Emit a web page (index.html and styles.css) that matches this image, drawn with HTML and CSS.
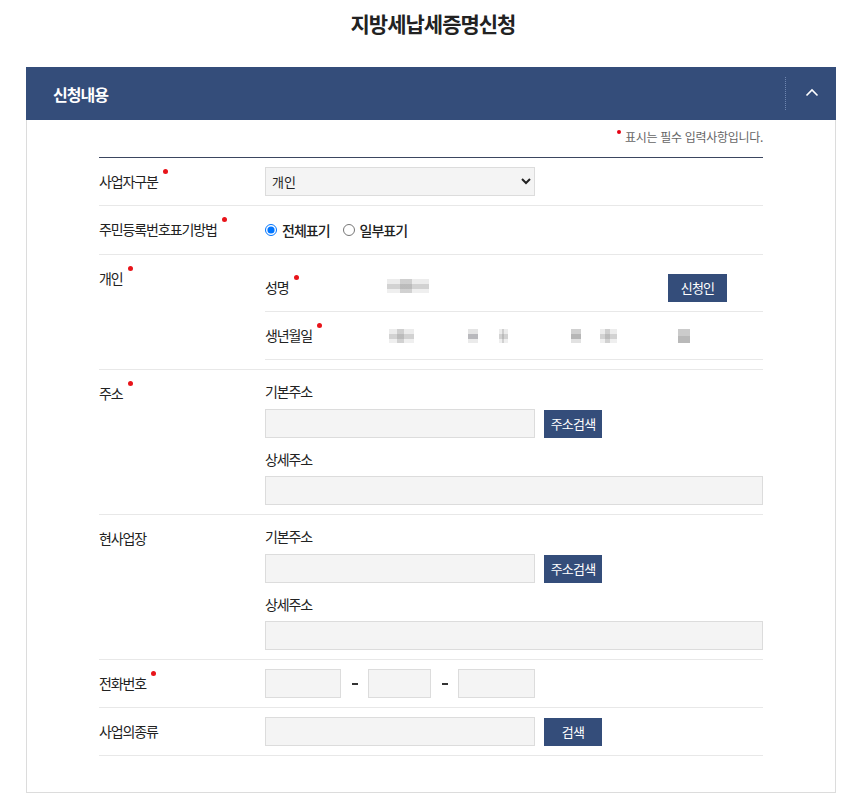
FILE: index.html
```html
<!DOCTYPE html>
<html lang="ko">
<head>
<meta charset="utf-8">
<title>지방세납세증명신청</title>
<link rel="stylesheet" href="styles.css">
</head>
<body>
<h1 class="title">지방세납세증명신청</h1>
<section class="panel">
  <div class="panel-head">
    <h2 class="panel-title">신청내용</h2>
    <div class="toggle">
      <svg width="14" height="9" viewBox="0 0 14 9"><polyline points="1.5,7.5 7,2 12.5,7.5" fill="none" stroke="#fff" stroke-width="1.6"/></svg>
    </div>
  </div>
  <div class="panel-body">
    <p class="note"><span class="dot"></span>표시는 필수 입력사항입니다.</p>
    <div class="form">
      <div class="row">
        <div class="label"><span class="req">사업자구분</span></div>
        <div class="field">
          <select class="select"><option>개인</option><option>법인</option></select>
        </div>
      </div>
      <div class="row row-radio">
        <div class="label"><span class="req">주민등록번호표기방법</span></div>
        <div class="field radios">
          <label class="radio"><input type="radio" name="m" checked> 전체표기</label>
          <label class="radio"><input type="radio" name="m"> 일부표기</label>
        </div>
      </div>
      <div class="row">
        <div class="label"><span class="req">개인</span></div>
        <div class="field">
          <div class="sub">
            <div class="sublabel"><span class="req">성명</span></div>
            <div class="value"><span class="mosaic m-name"></span></div>
            <button class="btn">신청인</button>
          </div>
          <div class="sub">
            <div class="sublabel"><span class="req">생년월일</span></div>
            <div class="value">
              <span class="mosaic b1"></span><span class="mosaic b2"></span><span class="mosaic b3"></span><span class="mosaic b4"></span><span class="mosaic b5"></span><span class="mosaic b6"></span>
            </div>
          </div>
        </div>
      </div>
      <div class="row">
        <div class="label"><span class="req">주소</span></div>
        <div class="field">
          <div class="caption">기본주소</div>
          <div class="line"><input class="input w270" type="text"><button class="btn">주소검색</button></div>
          <div class="caption second">상세주소</div>
          <input class="input full" type="text">
        </div>
      </div>
      <div class="row">
        <div class="label">현사업장</div>
        <div class="field">
          <div class="caption">기본주소</div>
          <div class="line"><input class="input w270" type="text"><button class="btn">주소검색</button></div>
          <div class="caption second">상세주소</div>
          <input class="input full" type="text">
        </div>
      </div>
      <div class="row">
        <div class="label"><span class="req">전화번호</span></div>
        <div class="field phone">
          <input class="input p1" type="text"><span class="dash"></span><input class="input p2" type="text"><span class="dash"></span><input class="input p3" type="text">
        </div>
      </div>
      <div class="row">
        <div class="label">사업의종류</div>
        <div class="field">
          <div class="line"><input class="input w270" type="text"><button class="btn">검색</button></div>
        </div>
      </div>
    </div>
  </div>
</section>
</body>
</html>
```
FILE: styles.css
```css
* { box-sizing: border-box; }
body {
  margin: 0;
  background: #fff;
  font-family: "Noto Sans CJK KR", "Noto Sans", sans-serif;
  color: #222;
}
.title {
  margin: 0;
  padding-top: 8px;
  height: 67px;
  font-size: 21px;
  line-height: 30px;
  font-weight: 700;
  letter-spacing: -1px;
  text-align: center;
  color: #222;
}
.panel {
  margin: 0 30px 0 26px;
  width: 810px;
  border: 1px solid #dcdcdc;
  border-top: 0;
}
.panel-head {
  height: 53px;
  background: #344d7a;
  display: flex;
  align-items: center;
  justify-content: space-between;
  margin: 0 -1px;
}
.panel-title {
  margin: 0 0 0 27px;
  font-size: 16px;
  font-weight: 700;
  color: #fff;
  letter-spacing: -1px;
}
.toggle {
  width: 51px;
  height: 33px;
  border-left: 1px dotted #6f86b0;
  display: flex;
  align-items: center;
  justify-content: center;
}
.toggle svg { display: block; margin-left: 1px; margin-top: -2px; }
.panel-body {
  padding: 8px 72px 36px 72px;
}
.note {
  margin: 0 0 11px;
  text-align: right;
  font-size: 12px;
  line-height: 18px;
  color: #666;
  letter-spacing: -0.3px;
}
.note .dot {
  display: inline-block;
  width: 4px;
  height: 4px;
  border-radius: 50%;
  background: #e60012;
  vertical-align: top;
  margin: 2px 4px 0 0;
}
.form {
  border-top: 1px solid #3b4660;
}
.row {
  display: grid;
  grid-template-columns: 166px 1fr;
  padding: 9px 0;
  border-bottom: 1px solid #e8e8e8;
}
.row-radio { padding-bottom: 10px; }
.label {
  font-size: 14px;
  line-height: 29px;
  letter-spacing: -1.1px;
  color: #222;
}
.req::after {
  content: "";
  display: inline-block;
  width: 5px;
  height: 5px;
  border-radius: 50%;
  background: #e8141a;
  vertical-align: top;
  margin: 2px 0 0 5px;
}
.field { font-size: 13px; }
.select {
  width: 270px;
  height: 29px;
  background: #f4f4f4;
  border: 1px solid #dcdcdc;
  border-radius: 0;
  font-family: "Noto Sans CJK KR", sans-serif;
  font-size: 13px;
  color: #222;
  padding: 0 2px;
}
.radios {
  display: flex;
  align-items: center;
  gap: 13px;
  height: 29px;
}
.radio {
  display: inline-flex;
  align-items: center;
  gap: 5px;
  font-size: 14px;
  font-weight: 500;
  letter-spacing: -1px;
  color: #222;
}
.radio input { margin: 0; width: 12px; height: 12px; }
.sub {
  display: grid;
  grid-template-columns: 122px 1fr auto;
  align-items: center;
  padding: 9px 36px 9px 0;
  border-bottom: 1px solid #e8e8e8;
  min-height: 48px;
}
.sublabel {
  font-size: 14px;
  line-height: 29px;
  letter-spacing: -1.1px;
}
.value { display: flex; align-items: center; height: 29px; }
.mosaic {
  display: inline-block;
  height: 14px;
  background:
    linear-gradient(90deg, rgba(0,0,0,0) 0 30%, rgba(120,120,120,0.25) 30% 60%, rgba(0,0,0,0) 60%),
    linear-gradient(180deg, #ececec 0 35%, #d2d2d2 35% 70%, #efefef 70%);
}
.m-name { width: 42px; margin-left: 0; margin-top: -4px; }
.b1 { width: 25px; margin-left: 2px; }
.b2 { width: 10px; margin-left: 54px; background: linear-gradient(180deg, #e4e4e4 0 35%, #b9b9bd 35% 70%, #ebebeb 70%); }
.b3 { width: 9px; margin-left: 21px; }
.b4 { width: 10px; margin-left: 63px; background: linear-gradient(180deg, #d0d0d0 0 35%, #b6b6b6 35% 70%, #e2e2e2 70%); }
.b5 { width: 17px; margin-left: 19px; }
.b6 { width: 12px; margin-left: 61px; background: linear-gradient(180deg, #cbcbcb 0 50%, #b9b9b9 50%); }
.btn {
  height: 28px;
  padding: 0 10px;
  border: 0;
  background: #344d7a;
  color: #fff;
  font-family: "Noto Sans CJK KR", sans-serif;
  font-size: 13px;
  letter-spacing: -0.8px;
  cursor: pointer;
}
.sub .btn { width: 59px; padding: 0; }
.line .btn { width: 58px; padding: 0; }
.caption {
  font-size: 14px;
  line-height: 24px;
  letter-spacing: -1.1px;
  margin-bottom: 6px;
}
.caption.second { margin-top: 9px; margin-bottom: 5px; }
.line {
  display: flex;
  align-items: center;
  gap: 9px;
}
.input {
  display: block;
  height: 29px;
  background: #f4f4f4;
  border: 1px solid #dcdcdc;
  border-radius: 0;
  padding: 0 6px;
  font-family: "Noto Sans CJK KR", sans-serif;
  font-size: 13px;
}
.w270 { width: 270px; }
.full { width: 100%; }
.phone { display: flex; align-items: center; }
.p1 { width: 76px; }
.p2 { width: 63px; }
.p3 { width: 77px; }
.dash {
  display: block;
  width: 27px;
  height: 2px;
  background: linear-gradient(90deg, transparent 0 11px, #333 11px 17px, transparent 17px);
}
```
